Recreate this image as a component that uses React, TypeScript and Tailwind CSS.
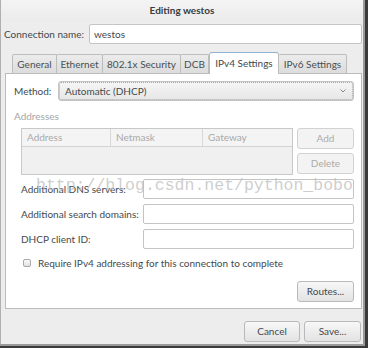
import React from "react";

const font = { fontFamily: "Lato, 'Open Sans', sans-serif" };

function Btn({ children, w, disabled }: { children: React.ReactNode; w: string; disabled?: boolean }) {
  return (
    <div
      className={
        "flex items-center justify-center h-[21px] rounded-[3px] border text-[10px] " +
        w +
        (disabled
          ? " border-[#d2d2d2] bg-[#f3f3f3] text-[#ababab]"
          : " border-[#b9b9b9] bg-gradient-to-b from-[#f7f7f7] to-[#e3e3e3] text-[#44494b]")
      }
    >
      {children}
    </div>
  );
}

function Input({ w, children }: { w: string; children?: React.ReactNode }) {
  return (
    <div className={"h-[20px] rounded-[2px] border border-[#c4c4c4] bg-white flex items-center px-[4px] text-[10px] text-[#44494b] " + w}>
      {children}
    </div>
  );
}

export default function App() {
  const tabs = [
    { t: "General", w: "w-[45px]" },
    { t: "Ethernet", w: "w-[47px]" },
    { t: "802.1x Security", w: "w-[79px]" },
    { t: "DCB", w: "w-[29px]" },
  ];
  return (
    <div className="w-[368px] h-[348px] bg-[#3a3a3a] overflow-hidden relative" style={font}>
      <div className="w-[365px] h-[346px] bg-[#9a9a9a] pr-[2px] pb-[2px]">
        <div className="w-[363px] h-[344px] bg-[#ededed] border-l border-[#b0b0b0] flex flex-col text-[#44494b]">
          {/* title */}
          <div className="h-[21px] flex items-center justify-center bg-gradient-to-b from-[#f4f4f4] to-[#ebebeb] text-[10px] font-bold text-[#393d3f]">
            Editing westos
          </div>
          {/* connection name */}
          <div className="flex items-center mt-[3px] pl-[3px] h-[20px]">
            <div className="w-[85px] text-[10px]">Connection name:</div>
            <Input w="w-[273px]">westos</Input>
          </div>
          {/* tabs */}
          <div className="flex items-end mt-[7px] pl-[11px] h-[22px] text-[10px]">
            {tabs.map((t) => (
              <div
                key={t.t}
                className={"h-[19px] flex items-center justify-center border border-b-0 border-[#bcbcbc] -ml-px first:ml-0 bg-gradient-to-b from-[#ececec] to-[#dcdcdc] text-[#4a4f51] rounded-t-[2px] " + t.w}
              >
                {t.t}
              </div>
            ))}
            <div className="w-[70px] h-[22px] flex items-center justify-center border border-b-0 border-[#bcbcbc] border-t-[#8fb0cf] bg-white rounded-t-[3px] relative z-10 -mb-px pb-[1px]">
              IPv4 Settings
            </div>
            <div className="w-[68px] h-[19px] flex items-center justify-center border border-b-0 border-l-0 border-[#bcbcbc] bg-gradient-to-b from-[#ececec] to-[#dcdcdc] text-[#4a4f51] rounded-t-[2px]">
              IPv6 Settings
            </div>
          </div>
          {/* panel */}
          <div className="ml-[4px] w-[357px] h-[236px] border border-[#bcbcbc] bg-white flex flex-col text-[10px] relative">
            <div className="flex items-center mt-[7px] h-[20px]">
              <div className="pl-[8px] w-[52px]">Method:</div>
              <div className="w-[296px] h-[20px] rounded-[3px] border border-[#c4c4c4] bg-gradient-to-b from-[#f6f6f6] to-[#e6e6e6] outline-1 outline-dotted outline-[#a8a8a8] -outline-offset-2 flex items-center justify-between pl-[6px] pr-[6px]">
                <span>Automatic (DHCP)</span>
                <svg width="8" height="6" viewBox="0 0 8 6">
                  <path d="M1.5 1.5 L4 4 L6.5 1.5" stroke="#888" strokeWidth="1" fill="none" />
                </svg>
              </div>
            </div>
            <div className="pl-[8px] mt-[9px] text-[#a6a6a6] h-[13px] leading-[13px]">Addresses</div>
            <div className="flex mt-[5px] pl-[15px]">
              <div className="w-[272px] h-[47px] border border-[#c8c8c8] bg-[#f0f0f0] flex flex-col">
                <div className="h-[18px] flex border-b border-[#d2d2d2] bg-[#f4f4f4] text-[#a9a9a9]">
                  <div className="w-[89px] pl-[5px] border-r border-[#d8d8d8] flex items-center">Address</div>
                  <div className="w-[92px] pl-[5px] border-r border-[#d8d8d8] flex items-center">Netmask</div>
                  <div className="flex-1 pl-[5px] flex items-center">Gateway</div>
                </div>
              </div>
              <div className="ml-[4px] flex flex-col gap-[4px]">
                <Btn w="w-[57px]" disabled>Add</Btn>
                <Btn w="w-[57px]" disabled>Delete</Btn>
              </div>
            </div>
            <div className="flex flex-col gap-[5px] mt-[4px] pl-[15px]">
              {["Additional DNS servers:", "Additional search domains:", "DHCP client ID:"].map((l) => (
                <div key={l} className="flex items-center h-[20px]">
                  <div className="w-[122px]">{l}</div>
                  <Input w="w-[211px]" />
                </div>
              ))}
            </div>
            <div className="flex items-center mt-[7px] pl-[17px] h-[14px]">
              <div className="w-[8px] h-[8px] border border-[#a8a8a8] rounded-[2px] bg-gradient-to-b from-[#fafafa] to-[#e2e2e2]" />
              <span className="ml-[7px]">Require IPv4 addressing for this connection to complete</span>
            </div>
            <div className="flex justify-end pr-[7px] mt-[11px]">
              <Btn w="w-[57px]">Routes...</Btn>
            </div>
            <div className="absolute left-[30px] top-[102px] text-[16.5px] leading-[20px] text-[#b8b8b8]/70 whitespace-nowrap pointer-events-none" style={{ fontFamily: "'Liberation Mono', monospace" }}>
              http://blog.csdn.net/python_bobo
            </div>
          </div>
          {/* footer */}
          <div className="flex justify-end gap-[4px] mt-[12px] pr-[2px]">
            <Btn w="w-[56px]">Cancel</Btn>
            <Btn w="w-[57px]">Save...</Btn>
          </div>
        </div>
      </div>
    </div>
  );
}
